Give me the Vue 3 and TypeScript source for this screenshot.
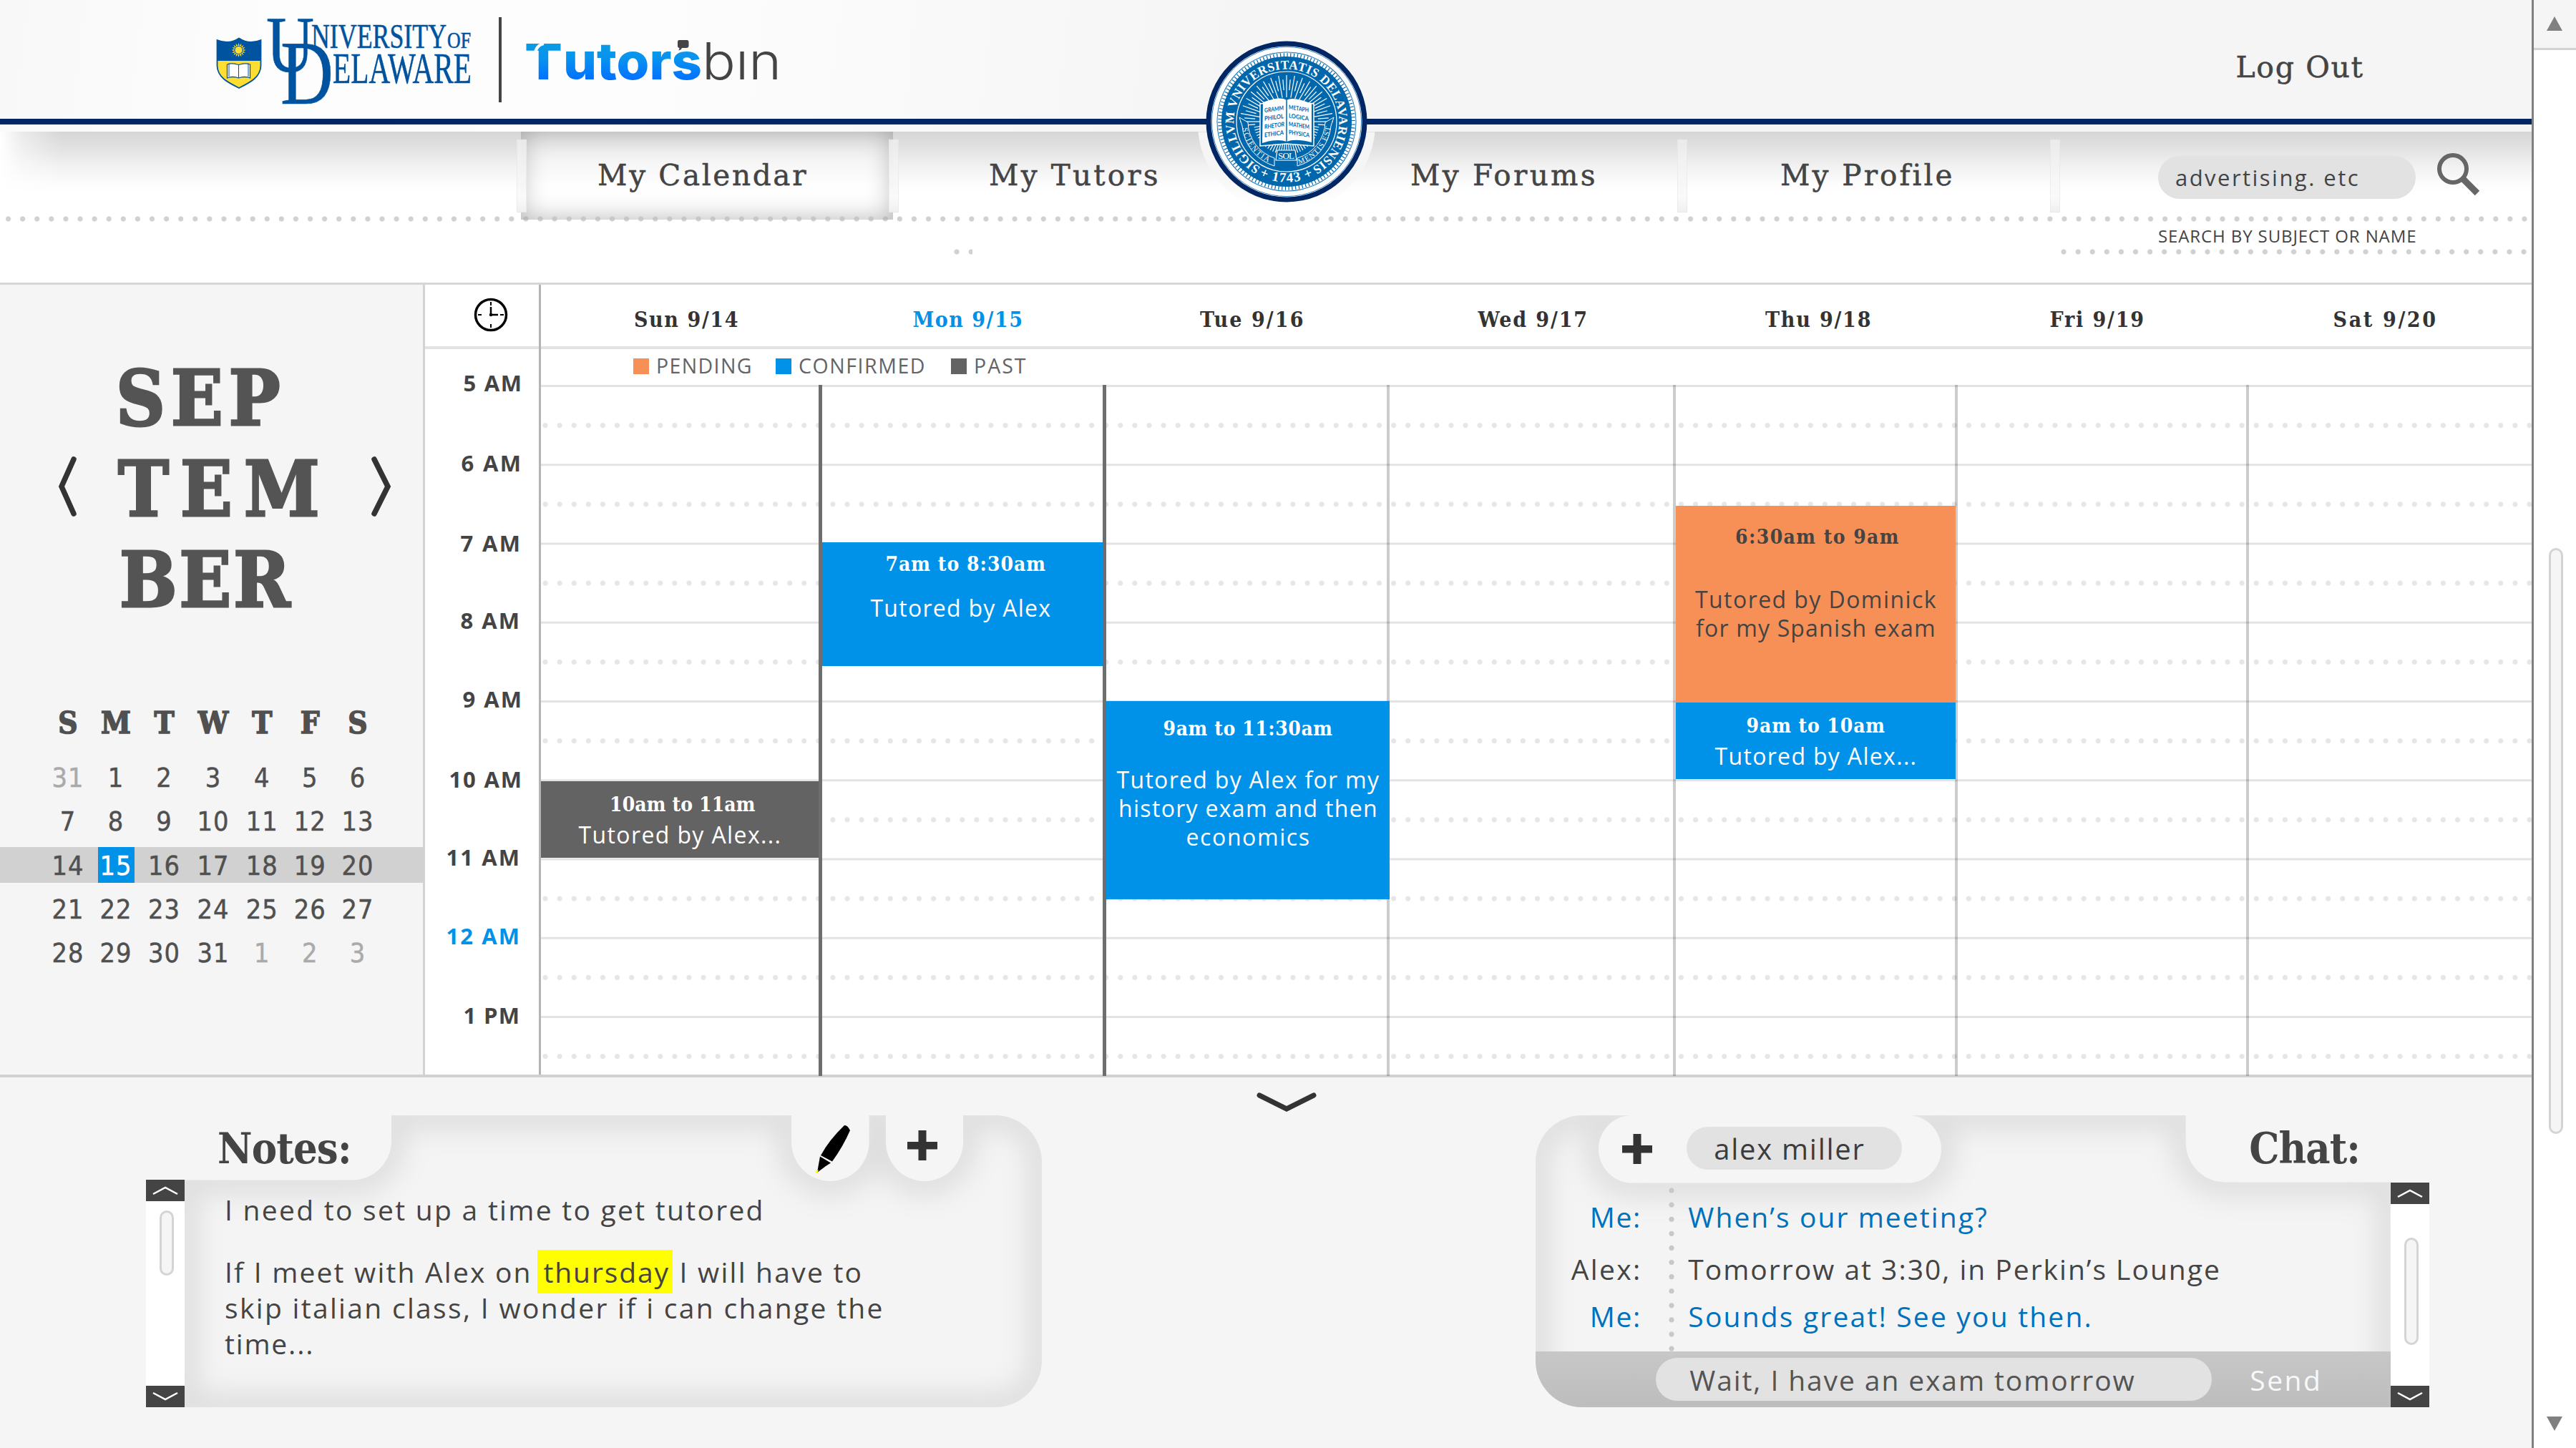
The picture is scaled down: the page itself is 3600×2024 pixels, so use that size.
<script setup lang="ts">
interface EventItem {
  kind: 'past' | 'confirmed' | 'pending'
  top: number
  height: number
  pad: number
  gap: number
  right: number
  shift: number
  title: string
  titleWidth: number
  lines: { text: string; width: number }[]
}
interface DayColumn {
  label: string
  labelWidth: number
  labelLeft: number
  width: number
  rule: 'none' | 'dark' | 'light'
  today?: boolean
  events: EventItem[]
}

/* Spreads the letters of an element so that the line is exactly as wide as asked. */
const fit = (el: HTMLElement, width: number) => {
  el.style.letterSpacing = '0px'
  const chars = Array.from(el.textContent ?? '').length
  if (chars < 2) return
  const spacing = (width + 1.5 - el.getBoundingClientRect().width) / (chars - 1)
  el.style.letterSpacing = `${spacing.toFixed(3)}px`
  el.style.marginRight = `${(-spacing).toFixed(3)}px`
}
const vFit = {
  mounted: (el: HTMLElement, binding: { value: number }) => fit(el, binding.value),
}

const tabs = [
  { label: 'My Calendar', width: 520, left: 107, text: 290, active: true, divider: true },
  { label: 'My Tutors', width: 549, left: 134, text: 235, active: false, divider: true },
  { label: 'My Forums', width: 553, left: 174, text: 257, active: false, divider: false },
  { label: 'My Profile', width: 521, left: 138, text: 238, active: false, divider: true },
]

const month = [
  { text: 'SEP', left: 0, width: 228 },
  { text: 'TEM', left: 3, width: 280 },
  { text: 'BER', left: 5, width: 237 },
]
const weekdays = ['S', 'M', 'T', 'W', 'T', 'F', 'S']
const weeks: number[][] = [
  [31, 1, 2, 3, 4, 5, 6],
  [7, 8, 9, 10, 11, 12, 13],
  [14, 15, 16, 17, 18, 19, 20],
  [21, 22, 23, 24, 25, 26, 27],
  [28, 29, 30, 31, 1, 2, 3],
]
const isOutside = (week: number, day: number) => (week === 0 && day > 7) || (week === 4 && day < 7)

const hours = [
  { label: '5 AM', gap: 26.5, width: 80, right: 24, now: false },
  { label: '6 AM', gap: 72, width: 82, right: 25, now: false },
  { label: '7 AM', gap: 72, width: 82, right: 26, now: false },
  { label: '8 AM', gap: 68, width: 81, right: 27, now: false },
  { label: '9 AM', gap: 70, width: 81, right: 24, now: false },
  { label: '10 AM', gap: 72, width: 100, right: 24, now: false },
  { label: '11 AM', gap: 69, width: 101, right: 27, now: false },
  { label: '12 AM', gap: 70, width: 101, right: 27, now: true },
  { label: '1 PM', gap: 71, width: 77, right: 27, now: false },
]

const days: DayColumn[] = [
  {
    label: 'Sun 9/14', labelWidth: 144, labelLeft: 130, width: 387.5, rule: 'none',
    events: [{
      kind: 'past', top: 554.5, height: 107, pad: 16.3, gap: 4.8, right: 0, shift: 8,
      title: '10am to 11am', titleWidth: 202,
      lines: [{ text: 'Tutored by Alex...', width: 281 }],
    }],
  },
  {
    label: 'Mon 9/15', labelWidth: 152, labelLeft: 132, width: 397.5, rule: 'dark', today: true,
    events: [{
      kind: 'confirmed', top: 220.5, height: 173, pad: 14, gap: 23.6, right: 5, shift: 9,
      title: '7am to 8:30am', titleWidth: 222,
      lines: [{ text: 'Tutored by Alex', width: 250 }],
    }],
  },
  {
    label: 'Tue 9/16', labelWidth: 143, labelLeft: 136, width: 396.6, rule: 'dark',
    events: [{
      kind: 'confirmed', top: 442.5, height: 277, pad: 22.3, gap: 33.3, right: -4, shift: 0,
      title: '9am to 11:30am', titleWidth: 235,
      lines: [
        { text: 'Tutored by Alex for my', width: 365 },
        { text: 'history exam and then', width: 360 },
        { text: 'economics', width: 171 },
      ],
    }],
  },
  { label: 'Wed 9/17', labelWidth: 151, labelLeft: 128, width: 400.4, rule: 'light', events: [] },
  {
    label: 'Thu 9/18', labelWidth: 146, labelLeft: 129, width: 393.6, rule: 'light',
    events: [
      {
        kind: 'pending', top: 169.5, height: 275, pad: 27.3, gap: 49.3, right: -1, shift: 4,
        title: '6:30am to 9am', titleWidth: 227,
        lines: [
          { text: 'Tutored by Dominick', width: 335 },
          { text: 'for my Spanish exam', width: 333 },
        ],
      },
      {
        kind: 'confirmed', top: 444.5, height: 107, pad: 16, gap: 4.6, right: -1, shift: 0,
        title: '9am to 10am', titleWidth: 192,
        lines: [{ text: 'Tutored by Alex...', width: 280 }],
      },
    ],
  },
  { label: 'Fri 9/19', labelWidth: 130, labelLeft: 133, width: 407, rule: 'light', events: [] },
  { label: 'Sat 9/20', labelWidth: 142, labelLeft: 122, width: 399.4, rule: 'light', events: [] },
]

const messages = [
  { who: 'Me:', whoWidth: 69, text: 'When’s our meeting?', width: 416, mine: true, top: 22.8 },
  { who: 'Alex:', whoWidth: 95, text: 'Tomorrow at 3:30, in Perkin’s Lounge', width: 741, mine: false, top: 22.8 },
  { who: 'Me:', whoWidth: 69, text: 'Sounds great! See you then.', width: 562, mine: true, top: 16.3 },
]

/* Sun rays of the seal: long and short strokes that start outside the book. */
const rays = Array.from({ length: 72 }, (_, i) => {
  const a = (i * 5 * Math.PI) / 180
  const upper = Math.sin(a) < 0.1
  const inner = upper ? (i % 2 ? 44 : 34) : 30
  const outer = upper ? (i % 2 ? 59 : 65) : 46
  return {
    x1: Math.cos(a) * inner, y1: Math.sin(a) * inner,
    x2: Math.cos(a) * outer, y2: Math.sin(a) * outer,
  }
})
const sunRays = Array.from({ length: 16 }, (_, i) => i * 22.5)

const notesShape =
  'M0 90.5H234A55 55 0 0 0 289 35.5V0H848V37A54.3 55 0 0 0 956.6 37V0H980V37A54 55 0 0 0 1088 37V0H1133A65 65 0 0 1 1198 65V343A65 65 0 0 1 1133 408H0Z'
const chatShape =
  'M65 0H135A47 47.2 0 0 0 135 94.5H520A47 47.2 0 0 0 520 0H908.7V38A55 55.5 0 0 0 963 93.5H1194.7V408H65A65 65 0 0 1 0 343V65A65 65 0 0 1 65 0Z'
</script>

<template>
  <div class="page">
    <main class="app">
      <header class="top">
        <svg class="brand" width="1120" height="166" viewBox="0 0 1120 166">
          <defs>
            <linearGradient id="tb" x1="0" y1="61" x2="0" y2="112" gradientUnits="userSpaceOnUse">
              <stop offset="0" stop-color="#0a9be3" />
              <stop offset=".4" stop-color="#0893ee" />
              <stop offset="1" stop-color="#0070ff" />
            </linearGradient>
            <clipPath id="shield"><path d="M303.5 56Q320 63 334 53.500Q348 63 364.500 56V92C364 108 350 115 334 123C318 115 304 108 303.500 92Z" /></clipPath>
          </defs>
          <g clip-path="url(#shield)">
            <rect x="300" y="50" width="70" height="36" fill="#00539f" />
            <rect x="300" y="85" width="70" height="42" fill="#ffdd31" />
          </g>
          <path d="M303.500 56Q320 63 334 53.500Q348 63 364.500 56V92C364 108 350 115 334 123C318 115 304 108 303.500 92Z" fill="none" stroke="#00539f" stroke-width="1.800" />
          <g transform="translate(333.500 70)">
            <path v-for="r in sunRays" :key="r" :transform="`rotate(${r})`" d="M-1.200 -6L0 -10L1.200 -6Z" fill="#ffdd31" />
            <circle r="5.500" fill="#ffdd31" stroke="#00539f" stroke-width=".8" />
          </g>
          <path d="M317.500 90Q325 87.500 333.500 90.500Q342 87.500 349.500 90V109Q342 106 333.500 109Q325 106 317.500 109Z" fill="#fff" stroke="#00539f" stroke-width="1.300" />
          <path d="M333.500 90.500V109M320 88.500V107M347 88.500V107" stroke="#00539f" stroke-width="1" />
          <g fill="#00539f" stroke="#00539f" stroke-width=".6" font-family="Liberation Serif, serif">
            <text x="372" y="100" font-size="113" textLength="67" lengthAdjust="spacingAndGlyphs">U</text>
            <text x="392" y="144.500" font-size="127" textLength="74" lengthAdjust="spacingAndGlyphs">D</text>
            <text x="435" y="67" font-size="48" textLength="189" lengthAdjust="spacingAndGlyphs">NIVERSITY</text>
            <text x="625" y="67" font-size="32" textLength="33" lengthAdjust="spacingAndGlyphs">OF</text>
            <text x="465" y="115.500" font-size="61" textLength="194" lengthAdjust="spacingAndGlyphs">ELAWARE</text>
          </g>
          <rect x="697" y="24" width="4" height="119" fill="#444" />
          <g fill="url(#tb)" font-family="Inter, sans-serif" font-weight="800">
            <text x="733" y="111" font-size="69" textLength="53" lengthAdjust="spacingAndGlyphs">T</text>
            <text x="787" y="111" font-size="71" textLength="194" lengthAdjust="spacingAndGlyphs">utors</text>
          </g>
          <path d="M747 77Q749 63 760 61" fill="none" stroke="#fcfcfc" stroke-width="4" />
          <path d="M949 56H960Q962.500 56 962.500 59V64Q962.500 67 959 67H953Q952 70 948 70.500Q949.500 69 949.500 67Q947 67 947 64V59Q947 56 949 56Z" fill="#444" />
          <text x="981" y="111" font-size="71" textLength="111" lengthAdjust="spacingAndGlyphs" fill="#444" font-family="Inter, sans-serif" font-weight="300">bın</text>
        </svg>
        <a class="logout slab"><span v-fit="176">Log Out</span></a>
      </header>
      <div class="rule"></div>
      <div class="strip"></div>

      <svg class="seal" width="250" height="250" viewBox="-125 -125 250 250">
        <defs>
          <path id="ring" d="M0 73.500A73.500 73.500 0 1 1 .01 73.500" />
          <path id="year" d="M-84.500 0A84.500 84.500 0 0 0 84.500 0" />
          <path id="motto" d="M-62 0A62 62 0 0 0 62 0" />
          <linearGradient id="halo" x1="0" y1="0" x2="0" y2="1">
            <stop offset=".5" stop-color="#f5f5f5" />
            <stop offset=".9" stop-color="#fff" />
          </linearGradient>
        </defs>
        <path d="M-123.500 14.500A124 124 0 0 0 123.500 14.500Z" fill="url(#halo)" />
        <circle r="112.500" fill="#002663" />
        <circle r="105.500" fill="#fff" />
        <circle r="104.500" fill="none" stroke="#3b86bd" stroke-width="1" />
        <circle r="97.500" fill="#0067ac" />
        <circle r="93.500" fill="none" stroke="#fff" stroke-width="5" stroke-dasharray="3.600 1.200" />
        <circle r="96.300" fill="none" stroke="#fff" stroke-width=".7" />
        <circle r="70" fill="none" stroke="#fff" stroke-width="1.200" />
        <g stroke="#fff" stroke-width="1.200">
          <line v-for="(r, i) in rays" :key="i" :x1="r.x1" :y1="r.y1" :x2="r.x2" :y2="r.y2" />
        </g>
        <g fill="#fff" font-family="Liberation Serif, serif" font-weight="700">
          <text font-size="17.500"><textPath href="#ring" startOffset="38" textLength="386">SIGILLVM VNIVERSITATIS DELAVARIENSIS</textPath></text>
          <text font-size="19"><textPath href="#year" startOffset="93" textLength="78">+ 1743 +</textPath></text>
        </g>
        <path d="M-66 -6L-54 1A54 54 0 0 0 -17 51V62A64 64 0 0 1 -62 6Z" fill="#0067ac" stroke="#fff" stroke-width="1" />
        <path d="M66 -6L54 1A54 54 0 0 1 15 51V62A64 64 0 0 0 62 6Z" fill="#0067ac" stroke="#fff" stroke-width="1" />
        <path d="M-13 40H12L14 54H-15Z" fill="#0067ac" stroke="#fff" stroke-width="1.200" />
        <g fill="#fff" font-family="Liberation Serif, serif">
          <text font-size="10.500"><textPath href="#motto" startOffset="9" textLength="62">SCIENTIA</textPath></text>
          <text font-size="10.500"><textPath href="#motto" startOffset="115" textLength="72">MENTIS EST</textPath></text>
          <text x="-12" y="51.500" font-size="13" textLength="23">SOL</text>
        </g>
        <path d="M-37 -25L0 -29L38 -25V34L0 31L-37 34Z" fill="#0067ac" stroke="#fff" stroke-width="1.500" />
        <path d="M-33 -27Q-9 -36 0 -30Q9 -36 35 -25V29Q12 23 0 28Q-12 23 -34 30Z" fill="#fff" />
        <path d="M0 -30V28" stroke="#0067ac" stroke-width="1.500" />
        <g fill="#0067ac" font-family="Lato, sans-serif" font-weight="700" font-size="8.500">
          <g transform="skewY(-8)">
            <text x="-31" y="-17" textLength="27" lengthAdjust="spacingAndGlyphs">GRAMM</text>
            <text x="-31" y="-5.500" textLength="27" lengthAdjust="spacingAndGlyphs">PHILOL</text>
            <text x="-31" y="6" textLength="28" lengthAdjust="spacingAndGlyphs">RHETOR</text>
            <text x="-31" y="17.500" textLength="27" lengthAdjust="spacingAndGlyphs">ETHICA</text>
          </g>
          <g transform="skewY(9)">
            <text x="3" y="-18" textLength="28" lengthAdjust="spacingAndGlyphs">METAPH</text>
            <text x="3" y="-6" textLength="28" lengthAdjust="spacingAndGlyphs">LOGICA</text>
            <text x="3" y="5.500" textLength="29" lengthAdjust="spacingAndGlyphs">MATHEM</text>
            <text x="3" y="17" textLength="29" lengthAdjust="spacingAndGlyphs">PHYSICA</text>
          </g>
        </g>
      </svg>

      <nav class="nav">
        <div class="nav-row">
          <a
            v-for="tab in tabs" :key="tab.label" class="tab slab"
            :class="{ active: tab.active, divider: tab.divider }"
            :style="{ width: `${tab.width}px`, paddingLeft: `${tab.left}px` }"
          ><span v-fit="tab.text">{{ tab.label }}</span></a>
          <div class="search divider">
            <div class="pill search-box"><span v-fit="254">advertising. etc</span></div>
            <svg class="lens" width="62" height="62" viewBox="0 0 62 62" fill="none" stroke="#666">
              <circle cx="23" cy="22" r="19" stroke-width="6" />
              <path d="M37 36L57 56" stroke-width="9" />
            </svg>
          </div>
        </div>
        <div class="dots"></div>
        <div class="hint"><span v-fit="359">SEARCH BY SUBJECT OR NAME</span></div>
        <div class="dots-row">
          <div class="dots short"></div>
          <div class="dots long"></div>
        </div>
      </nav>

      <section class="calendar">
        <aside class="side">
          <div class="month">
            <svg width="36" height="92" viewBox="0 0 36 92" class="prev"><path d="M27 8L10 46L27 84" /></svg>
            <div class="month-name">
              <div v-for="m in month" :key="m.text" :style="{ paddingLeft: `${m.left}px` }">
                <span v-fit="m.width">{{ m.text }}</span>
              </div>
            </div>
            <svg width="36" height="92" viewBox="0 0 36 92" class="next"><path d="M9 8L28 46L9 84" /></svg>
          </div>
          <div class="week heads"><b v-for="(d, i) in weekdays" :key="i">{{ d }}</b></div>
          <div v-for="(w, wi) in weeks" :key="wi" class="week" :class="{ current: wi === 2 }">
            <span
              v-for="(d, di) in w" :key="di"
              :class="{ faded: isOutside(wi, d), today: d === 15 }"
            >{{ d }}</span>
          </div>
        </aside>

        <div class="times">
          <div class="clock">
            <svg width="50" height="50" viewBox="-25 -25 50 50" fill="none" stroke="#000" stroke-width="3.500">
              <circle r="21.500" />
              <path d="M0 -18V-13M0 13V18M-18 0H-13M13 0H18" stroke-width="2" />
              <path d="M0 -11V0H10" stroke-width="2.500" />
              <circle r="1.500" fill="#000" stroke-width="1.500" />
            </svg>
          </div>
          <div
            v-for="h in hours" :key="h.label" class="hour" :class="{ now: h.now }"
            :style="{ marginTop: `${h.gap}px`, paddingRight: `${h.right}px` }"
          ><span v-fit="h.width">{{ h.label }}</span></div>
        </div>

        <div class="week-view">
          <div class="heads-row">
            <div
              v-for="d in days" :key="d.label" class="head slab" :class="{ blue: d.today }"
              :style="{ width: `${d.width}px`, paddingLeft: `${d.labelLeft}px` }"
            ><span v-fit="d.labelWidth">{{ d.label }}</span></div>
          </div>
          <div class="legend">
            <div><i class="pending"></i><span v-fit="132">PENDING</span></div>
            <div><i class="confirmed"></i><span v-fit="175">CONFIRMED</span></div>
            <div><i class="past"></i><span v-fit="71">PAST</span></div>
          </div>
          <div class="grid">
            <div
              v-for="d in days" :key="d.label" class="col" :class="d.rule"
              :style="{ width: `${d.width}px` }"
            >
              <article
                v-for="e in d.events" :key="e.title" class="event" :class="e.kind"
                :style="{ top: `${e.top}px`, height: `${e.height}px`, right: `${e.kind === 'confirmed' && e.right > 0 ? 0 : e.right}px`, paddingTop: `${e.pad}px` }"
              >
                <h4 class="slab" :style="{ marginBottom: `${e.gap}px`, paddingLeft: `${e.shift}px` }"><span v-fit="e.titleWidth">{{ e.title }}</span></h4>
                <p v-for="l in e.lines" :key="l.text" :style="{ paddingRight: `${Math.max(e.right, 0)}px` }"><span v-fit="l.width">{{ l.text }}</span></p>
              </article>
            </div>
          </div>
        </div>
      </section>

      <section class="lower">
        <svg class="fold" width="92" height="34" viewBox="0 0 92 34"><path d="M8 7L46 26L84 7" /></svg>

        <div class="notes">
          <div class="bar notes-bar">
            <div class="btn"><svg width="40" height="20" viewBox="0 0 40 20"><path d="M3 15L20 6L37 15" /></svg></div>
            <div class="thumb"></div>
            <div class="btn end"><svg width="40" height="20" viewBox="0 0 40 20"><path d="M3 5L20 14L37 5" /></svg></div>
          </div>
          <div class="notes-body">
            <svg class="shape" width="1200" height="410" viewBox="0 0 1200 410">
              <defs>
                <clipPath id="nclip"><path :d="notesShape" /></clipPath>
                <filter id="soft" x="-10%" y="-20%" width="120%" height="140%"><feGaussianBlur stdDeviation="18" /></filter>
              </defs>
              <g clip-path="url(#nclip)">
                <path :d="notesShape" fill="#f4f4f4" />
                <path :d="notesShape" fill="none" stroke="#dedede" stroke-width="40" filter="url(#soft)" />
              </g>
            </svg>
            <div class="notes-head">
              <h2 class="slab"><span v-fit="186">Notes:</span></h2>
              <svg class="pen" width="60" height="76" viewBox="0 0 60 76">
                <path d="M45 4Q49 3 53 11Q43 34 28 54.500L12 46Q24 24 45 4Z" />
                <path d="M11 47.500L26 56.500L19 61L7 70Z" />
                <path d="M4 69L9 66L7 72Z" fill="#ff0" />
              </svg>
              <svg class="plus" width="42" height="42" viewBox="0 0 42 42"><path d="M0 16H15.500V0H26.500V16H42V26.500H26.500V42H15.500V26.500H0Z" /></svg>
            </div>
            <div class="notes-text">
              <p><span v-fit="751">I need to set up a time to get tutored</span></p>
              <p class="second"><span v-fit="426">If I meet with Alex on</span><mark><span v-fit="173">thursday</span></mark><span v-fit="253">I will have to</span></p>
              <p><span v-fit="918">skip italian class, I wonder if i can change the</span></p>
              <p><span v-fit="122">time...</span></p>
            </div>
          </div>
        </div>

        <div class="chat">
          <div class="chat-body">
            <svg class="shape" width="1196" height="410" viewBox="0 0 1196 410">
              <defs><clipPath id="cclip"><path :d="chatShape" /></clipPath></defs>
              <g clip-path="url(#cclip)">
                <path :d="chatShape" fill="#f4f4f4" />
                <path :d="chatShape" fill="none" stroke="#dedede" stroke-width="40" filter="url(#soft)" />
              </g>
            </svg>
            <div class="chat-head">
              <svg class="plus" width="42" height="42" viewBox="0 0 42 42"><path d="M0 16H15.500V0H26.500V16H42V26.500H26.500V42H15.500V26.500H0Z" /></svg>
              <div class="pill contact"><span v-fit="208">alex miller</span></div>
              <h2 class="slab"><span v-fit="154">Chat:</span></h2>
            </div>
            <div class="messages">
              <div
                v-for="m in messages" :key="m.text" class="message" :class="{ mine: m.mine }"
                :style="{ marginTop: `${m.top}px` }"
              >
                <div class="who"><span v-fit="m.whoWidth">{{ m.who }}</span></div>
                <div><span v-fit="m.width">{{ m.text }}</span></div>
              </div>
            </div>
            <div class="composer">
              <div class="pill draft"><span v-fit="620">Wait, I have an exam tomorrow</span></div>
              <span v-fit="97" class="send">Send</span>
            </div>
          </div>
          <div class="bar chat-bar">
            <div class="btn"><svg width="40" height="20" viewBox="0 0 40 20"><path d="M3 15L20 6L37 15" /></svg></div>
            <div class="thumb"></div>
            <div class="btn end"><svg width="40" height="20" viewBox="0 0 40 20"><path d="M3 5L20 14L37 5" /></svg></div>
          </div>
        </div>
      </section>
    </main>

    <div class="page-scroll">
      <div class="up"><svg width="22" height="20" viewBox="0 0 22 20"><path d="M11 0L22 20H0Z" /></svg></div>
      <div class="page-thumb"></div>
      <svg class="down" width="22" height="20" viewBox="0 0 22 20"><path d="M0 0H22L11 20Z" /></svg>
    </div>
  </div>
</template>

<style>
body { background: #fff; overflow: hidden; }
</style>

<style scoped>
* { box-sizing: border-box; }
h2, h4, p { margin: 0; font-weight: inherit; font-size: inherit; }
span { display: inline-block; white-space: pre; }
svg { display: block; flex: none; }

.page {
  display: flex;
  width: 3600px;
  height: 2024px;
  overflow: hidden;
  color: #444;
  font-family: "Open Sans", "Noto Sans", sans-serif;
}
.app { position: relative; width: 3538px; display: flex; flex-direction: column; }
.slab { font-family: "DejaVu Serif Condensed", "DejaVu Serif", serif; font-stretch: condensed; }
.pill { background: #e2e2e2; border-radius: 30px; height: 60px; }

/* header */
.top {
  display: flex;
  justify-content: space-between;
  height: 166px;
  background: linear-gradient(97deg, #f8f8f8 0, #fdfdfd 400px, #fdfdfd 900px, #f5f5f5 1750px);
}
.brand { overflow: visible; }
.logout { margin: 70px 236px 0 0; font-size: 41px; line-height: 48px; }
.logout, .tab { font-family: "DejaVu Serif", serif; font-stretch: normal; -webkit-text-stroke: .5px #444; }
.rule { height: 8px; background: #002663; }
.strip { height: 10px; background: linear-gradient(90deg, #fafafa 0, #fdfdfd 800px, #f5f5f5 1700px); }
.seal { position: absolute; left: 1672.500px; top: 44.500px; z-index: 2; }

/* navigation */
.nav {
  height: 211px;
  background:
    linear-gradient(90deg, #fff 0, rgba(255, 255, 255, .5) 30px, rgba(255, 255, 255, 0) 85px) 0 0 / 100% 90px no-repeat,
    linear-gradient(#d6d6d6 0, #e2e2e2 24px, #f1f1f1 48px, #fcfcfc 72px, #fff 86px);
}
.nav-row { display: flex; height: 123px; padding-left: 728px; }
.tab { position: relative; height: 123px; padding-top: 37px; font-size: 40.500px; line-height: 48px; }
.tab.active {
  background: rgba(255, 255, 255, .45);
  box-shadow: inset 0 0 36px rgba(0, 0, 0, .3);
}
.divider::before {
  content: "";
  position: absolute;
  left: -6px;
  top: 11px;
  width: 12px;
  height: 100px;
  background: linear-gradient(rgba(236, 236, 236, .9), #fafafa 80%, #f0f0f0);
  border: 1px solid rgba(225, 225, 225, .5);
}
.search { position: relative; flex: 1; display: flex; padding: 34px 0 0 145px; }
.search-box { width: 360px; padding: 5px 0 0 24px; font-size: 31px; line-height: 50px; }
.lens { margin: -4px 0 0 29px; }
.dots {
  height: 8px;
  margin-top: -5px;
  background: radial-gradient(circle at center, rgba(0, 0, 0, .18) 3.200px, transparent 4px) 1.500px 0 / 20.100px 8px repeat-x;
}
.hint { height: 38px; padding: 4px 0 0 3016px; font-size: 24px; line-height: 32px; }
.dots-row { display: flex; justify-content: space-between; padding-left: 1332px; }
.dots-row .dots { margin: 0; background-position-x: -5px; }
.dots.short { width: 27px; }
.dots.long { width: 662px; background-position-x: -2px !important; }

/* calendar */
.calendar {
  display: flex;
  height: 1110.500px;
  border-top: 3px solid #d6d6d6;
  border-bottom: 4px solid #d1d1d1;
}
.side { width: 594px; background: #f5f5f5; border-right: 3px solid #d2d2d2; }
.month { display: flex; align-items: center; padding-top: 93.600px; height: 477.600px; }
.month svg { fill: none; stroke: #333; stroke-width: 7.500; stroke-linecap: round; margin-bottom: 8px; }
.prev { margin-left: 76px; }
.next { margin-left: 14px; }
.month-name {
  width: 338px;
  margin-left: 50px;
  color: #545454;
  font: 700 106px/127px "DejaVu Serif Condensed", "DejaVu Serif", serif;
  -webkit-text-stroke: 3px #545454;
}
.week {
  display: grid;
  grid-template-columns: 67px 67px 68px 69px 67.500px 66.500px 67px;
  height: 50px;
  padding-left: 61.500px;
  margin-bottom: 11.300px;
  color: #505050;
  text-align: center;
  font: 37.500px/52px "DejaVu Sans Condensed", "DejaVu Sans", sans-serif;
}
.week span { letter-spacing: 1px; -webkit-text-stroke: .5px currentColor; }
.week.heads {
  margin: 110px 0 25.500px;
  color: #505050;
  font: 42px/50px "DejaVu Serif Condensed", "DejaVu Serif", serif;
  -webkit-text-stroke: 1.500px #505050;
}
.week.current { background: #d1d1d1; }
.week .faded { color: #aaa; }
.week .today { background: #0092e8; color: #fff; width: 51px; justify-self: center; height: 50px; }

.times { width: 159px; text-align: right; }
.clock { display: flex; justify-content: center; height: 90px; padding: 16.500px 0 0 25px; border-bottom: 4px solid #e2e2e2; }
.hour { height: 40px; font-size: 31px; line-height: 40px; font-weight: 700; }
.now, .blue { color: #0092e8 !important; }

.week-view { width: 2785px; border-left: 3px solid #b4b4b4; }
.heads-row { display: flex; height: 90px; border-bottom: 4px solid #e2e2e2; }
.head { flex: none; padding-top: 28.500px; font-size: 30px; line-height: 40px; font-weight: 700; color: #333; }
.legend { display: flex; height: 49.500px; padding: 13px 0 0 129px; font-size: 28.500px; line-height: 20px; color: #646464; }
.legend div { display: flex; align-items: flex-start; }
.legend div:nth-child(1) { width: 199px; }
.legend div:nth-child(2) { width: 245px; }
.legend i { flex: none; width: 22px; height: 22px; margin-right: 10px; }
.pending { background: #f79057; }
.confirmed { background: #0092e8; }
.past { background: #636363; }
.grid {
  display: flex;
  height: 966px;
  background:
    linear-gradient(#e3e3e3, #e3e3e3) 0 0 / 100% 3px no-repeat,
    linear-gradient(#e3e3e3 3px, transparent 3px) 0 0 / 100% 110.250px repeat-y,
    radial-gradient(circle at center, #e6e6e6 3.200px, transparent 4px) -4px 1.500px / 20.100px 110.250px;
}
.col { position: relative; flex: none; height: 100%; }
.col.dark { border-left: 5px solid #6e6e6e; }
.col.light { border-left: 4px solid rgba(0, 0, 0, .2); }
.event { position: absolute; left: 0; z-index: 1; text-align: center; color: #fff; }
.event.pending { color: #444; }
.event h4 { height: 34px; font-size: 28px; line-height: 34px; font-weight: 700; }
.event p { height: 40px; font-size: 32px; line-height: 40px; }

/* lower area */
.lower { position: relative; flex: 1; display: flex; justify-content: space-between; background: #f5f5f5; padding: 53px 143px 0 204px; }
.fold { position: absolute; left: 1752px; top: 18px; fill: none; stroke: #333; stroke-width: 7; stroke-linecap: round; }
.shape { position: absolute; left: 0; top: 0; }
.plus { fill: #333; }

.notes, .chat { display: flex; height: 408px; }
.bar { width: 54px; background: #fff; display: flex; flex-direction: column; align-items: center; }
.notes-bar { margin-top: 90.500px; }
.btn { display: flex; align-items: center; justify-content: center; width: 54px; height: 30px; background: #444; }
.btn svg { fill: none; stroke: #fff; stroke-width: 2.500; }
.btn.end { margin-top: auto; }
.thumb { width: 20px; height: 91px; margin: 13px 0 0 3px; border: 3px solid #d4d4d4; border-radius: 10px; background: #f5f5f5; }
.notes-body { position: relative; width: 1198px; }
.notes-head, .notes-text, .chat-head, .messages, .composer { position: relative; }
.notes-head { display: flex; height: 91px; }
h2 { font-size: 59px; line-height: 60px; font-weight: 700; }
.notes-head h2 { width: 830px; padding: 17.500px 0 0 46px; }
.pen { margin: 10px 0 0 47px; }
.notes-head .plus { margin: 21.500px 0 0 73px; }
.notes-text { padding: 16px 0 0 56px; font-size: 39px; line-height: 50px; }
.notes-text p { height: 50px; white-space: nowrap; }
.notes-text .second { display: flex; width: 893px; margin-top: 37.300px; }
mark { flex: none; width: 189px; height: 61px; margin: -5.500px 10px 0 9px; padding: 5.500px 0 0 9px; background: #ff0; color: inherit; }

.chat-body { position: relative; width: 1194.700px; }
.chat-head { display: flex; height: 94.500px; }
.chat-head .plus { margin: 26.500px 0 0 121px; }
.contact { width: 301px; margin: 16.500px 0 0 48px; padding: 6px 0 0 38px; font-size: 40px; line-height: 50px; color: #3c3c3c; }
.chat-head h2 { margin: 17.500px 0 0 485px; }
.messages {
  height: 236px;
  font-size: 39px;
  line-height: 50px;
  background: radial-gradient(circle at center, #c8c8c8 3.200px, transparent 4px) 186px 1px / 8px 20.100px repeat-y;
  overflow: hidden;
}
.message { display: grid; grid-template-columns: 146px auto; column-gap: 67px; height: 50px; }
.who { text-align: right; }
.mine { color: #0071bc; }
.composer {
  display: flex;
  height: 77.500px;
  background: linear-gradient(#c7c7c7, #bdbdbd);
  border-bottom-left-radius: 65px;
  font-size: 39px;
  line-height: 50px;
}
.draft { width: 777px; margin: 9px 0 0 168px; padding: 6px 0 0 47px; color: #545454; }
.send { margin: 14.500px 0 0 53px; color: #f8f8f8; }
.chat-bar { margin-top: 94.500px; }
.chat-bar .thumb { height: 150px; margin-top: 47px; }

/* page scrollbar */
.page-scroll { width: 62px; border-left: 3px solid #808080; background: #fff; display: flex; flex-direction: column; align-items: center; fill: #808080; }
.up { display: flex; justify-content: center; width: 100%; height: 70px; padding: 23px 2px 0 0; background: #f5f5f5; border-bottom: 3px solid #d2d2d2; }
.page-thumb { width: 20px; height: 819px; margin: 696px 0 0 2px; border: 3px solid #d4d4d4; border-radius: 10px; background: #f5f5f5; }
.down { margin: 395px 2px 0 0; }
</style>
